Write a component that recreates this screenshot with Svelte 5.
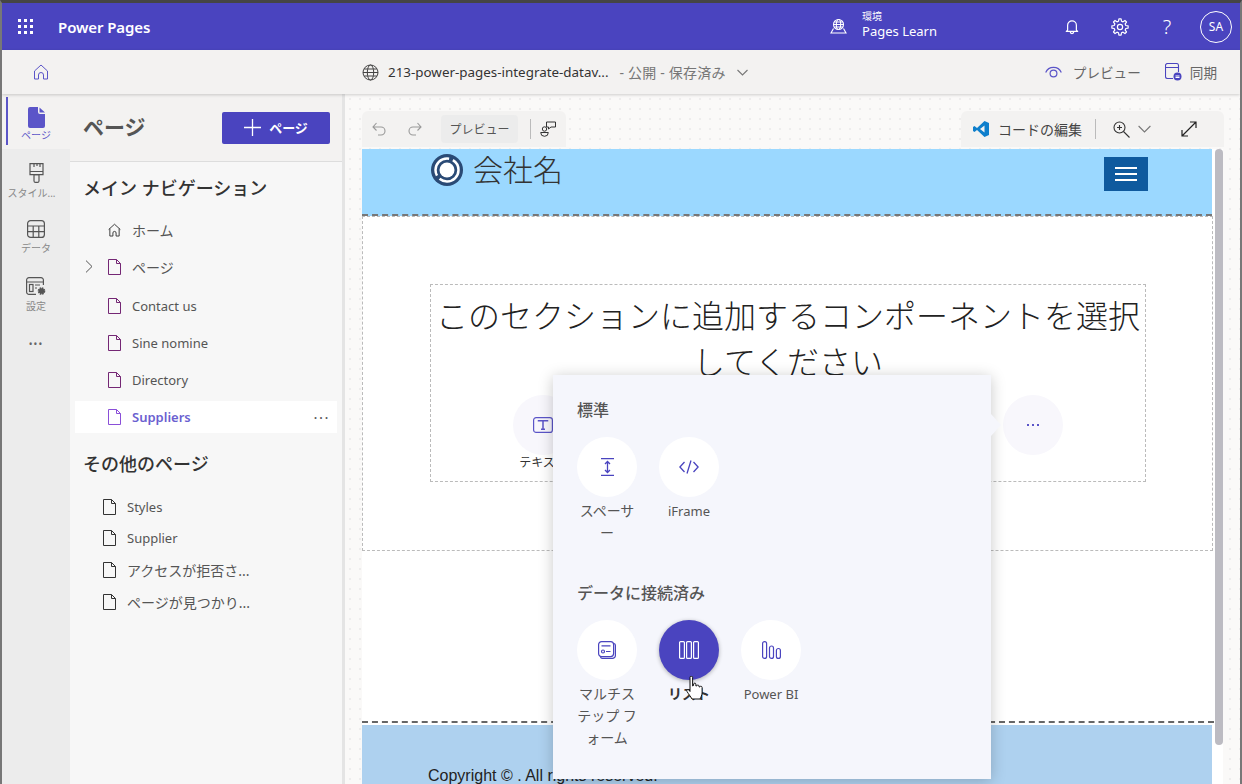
<script>
  const railItems = [
    { label: "ページ", icon: "page", active: true },
    { label: "スタイル...", icon: "brush", long: true },
    { label: "データ", icon: "table" },
    { label: "設定", icon: "settings" }
  ];
  const mainNav = [
    { label: "ホーム", icon: "home", jp: true },
    { label: "ページ", icon: "file", chevron: true, jp: true },
    { label: "Contact us", icon: "file" },
    { label: "Sine nomine", icon: "file" },
    { label: "Directory", icon: "file" },
    { label: "Suppliers", icon: "file", selected: true }
  ];
  const otherPages = [
    { label: "Styles" },
    { label: "Supplier" },
    { label: "アクセスが拒否さ...", jp: true },
    { label: "ページが見つかり...", jp: true }
  ];
  const components = ["テキスト", "画像", "ビデオ", "ボタン", "フォーム"];

  // outline of a cog, 8 teeth
  function gearPath(cx, cy, outer, inner, teeth) {
    const step = (Math.PI * 2) / teeth;
    let d = "";
    for (let t = 0; t < teeth; t++) {
      const a = t * step;
      const pts = [
        [inner, a - step * 0.32],
        [outer, a - step * 0.17],
        [outer, a + step * 0.17],
        [inner, a + step * 0.32]
      ];
      for (const [r, ang] of pts) {
        const x = (cx + r * Math.cos(ang)).toFixed(2);
        const y = (cy + r * Math.sin(ang)).toFixed(2);
        d += (d ? "L" : "M") + x + " " + y;
      }
    }
    return d + "z";
  }
</script>

<div class="app">
  <header class="topbar">
    <svg class="waffle" width="16" height="16" viewBox="0 0 16 16" fill="#fff">
      <rect x="0" y="0" width="3" height="3" /><rect x="6" y="0" width="3" height="3" /><rect x="12" y="0" width="3" height="3" />
      <rect x="0" y="6" width="3" height="3" /><rect x="6" y="6" width="3" height="3" /><rect x="12" y="6" width="3" height="3" />
      <rect x="0" y="12" width="3" height="3" /><rect x="6" y="12" width="3" height="3" /><rect x="12" y="12" width="3" height="3" />
    </svg>
    <span class="brand">Power Pages</span>
    <div class="env">
      <svg width="17" height="17" viewBox="0 0 17 17" fill="none" stroke="#fff" stroke-width="1.1">
        <circle cx="8.5" cy="6.5" r="5" />
        <ellipse cx="8.5" cy="6.5" rx="2.2" ry="5" />
        <path d="M3.5 6.5h10M4.300 4h8.400M4.300 9h8.400" />
        <path d="M3.500 10.500 1 15h15l-2.500-4.500" />
      </svg>
      <div class="env-text">
        <span class="env-label">環境</span>
        <span class="env-name">Pages Learn</span>
      </div>
    </div>
    <svg class="bell" width="14" height="16" viewBox="0 0 16 18" fill="none" stroke="#fff" stroke-width="1.400">
      <path d="M3 12.500V7a5 5 0 0 1 10 0v5.500l1.500 1.500h-13z" stroke-linejoin="round" />
      <path d="M6 14.500a2 2 0 0 0 4 0" />
    </svg>
    <svg class="gear" width="18" height="18" viewBox="0 0 18 18" fill="none" stroke="#fff" stroke-width="1.200">
      <circle cx="9" cy="9" r="2.600" />
      <path d={gearPath(9, 9, 8.2, 6, 8)} stroke-linejoin="round" />
    </svg>
    <span class="help">?</span>
    <span class="avatar">SA</span>
  </header>

  <div class="subbar">
    <svg class="sub-home" width="16" height="16" viewBox="0 0 16 16" fill="none" stroke="#5b55c8" stroke-width="1">
      <path d="M1.500 7 8 1l6.500 6v8h-4v-4a2.500 2.500 0 0 0-5 0v4h-4z" stroke-linejoin="round" />
    </svg>
    <div class="site">
      <svg width="17" height="17" viewBox="0 0 17 17" fill="none" stroke="#444" stroke-width="1">
        <circle cx="8.500" cy="8.500" r="7.500" />
        <ellipse cx="8.500" cy="8.500" rx="3.200" ry="7.500" />
        <path d="M1 8.500h15M2 5h13M2 12h13" />
      </svg>
      <span class="site-name">213-power-pages-integrate-datav...</span>
      <span class="site-state">- 公開 - 保存済み</span>
      <svg width="11" height="7" viewBox="0 0 11 7" fill="none" stroke="#777" stroke-width="1.100"><path d="M.5 1 5.500 6l5-5" /></svg>
    </div>
    <div class="sub-actions">
      <svg width="17" height="12" viewBox="0 0 17 12" fill="none" stroke="#5b55c8" stroke-width="1.200">
        <path d="M.7 6.500a8.500 8.500 0 0 1 15.600 0" />
        <circle cx="8.500" cy="7.500" r="3.400" />
      </svg>
      <span class="sub-label preview">プレビュー</span>
      <svg class="sync" width="17" height="18" viewBox="0 0 17 18" fill="none" stroke="#4a44bf" stroke-width="1.100">
        <path d="M8 15.500H2.500a2 2 0 0 1-2-2v-11a2 2 0 0 1 2-2h9a2 2 0 0 1 2 2V9M.5 4.500h13" />
        <circle cx="12.500" cy="13.500" r="4" fill="#4a44bf" stroke="none" />
        <path d="M10.500 13h4M10.500 14.500h4" stroke="#fff" />
      </svg>
      <span class="sub-label sync-label">同期</span>
    </div>
  </div>

  <div class="workspace">
    <nav class="rail">
      {#each railItems as item}
        <div class="rail-item" class:active={item.active} class:long={item.long}>
          {#if item.icon === "page"}
            <svg width="17" height="21" viewBox="0 0 17 21">
              <path d="M2 0h8v5a2 2 0 0 0 2 2h5v12a2 2 0 0 1-2 2H2a2 2 0 0 1-2-2V2a2 2 0 0 1 2-2z" fill="#5b55c8" />
              <path d="M11.500 .5 17 5.500h-5.500z" fill="#5b55c8" />
            </svg>
          {:else if item.icon === "brush"}
            <svg width="15" height="20" viewBox="0 0 15 20" fill="none" stroke="#555" stroke-width="1.200">
              <path d="M1 .6h13v11H1zM1 8.500h13M5 .6v3.500M8 .6v2.500M11 .6v3.500" />
              <path d="M5 11.600h5V18a1.500 1.500 0 0 1-1.500 1.400h-2A1.500 1.500 0 0 1 5 18z" />
            </svg>
          {:else if item.icon === "table"}
            <svg width="18" height="18" viewBox="0 0 18 18" fill="none" stroke="#555" stroke-width="1.200">
              <rect x=".6" y=".6" width="16.800" height="16.800" rx="3" />
              <path d="M.6 6h16.800M.6 11.700h16.800M6.200 6v11.400M11.800 6v11.400" />
            </svg>
          {:else}
            <svg width="20" height="19" viewBox="0 0 20 19" fill="none" stroke="#555" stroke-width="1.200">
              <path d="M17.400 8V3a2.400 2.400 0 0 0-2.400-2.400H3A2.400 2.400 0 0 0 .6 3v12A2.400 2.400 0 0 0 3 17.400h7M.6 5h16.800" />
              <rect x="3.500" y="7.500" width="3.500" height="7" />
              <path d="M9 8h5M9 11h2" />
              <circle cx="15.500" cy="14" r="2.800" fill="#555" stroke-dasharray="1.500 .7" stroke-width="2" />
            </svg>
          {/if}
          <span>{item.label}</span>
        </div>
      {/each}
      <span class="rail-more">•••</span>
    </nav>

    <aside class="panel">
      <div class="panel-head">
        <h1>ページ</h1>
        <button class="add">
          <svg width="17" height="17" viewBox="0 0 17 17" stroke="#fff" stroke-width="1.300"><path d="M8.500 0v17M0 8.500h17" /></svg>
          ページ
        </button>
      </div>
      <div class="panel-body">
        <h2>メイン ナビゲーション</h2>
        <ul class="nav">
          {#each mainNav as row}
            <li class:selected={row.selected} class:jp={row.jp}>
              {#if row.chevron}
                <svg class="chev" width="8" height="13" viewBox="0 0 8 13" fill="none" stroke="#555" stroke-width="1"><path d="m1 .6 6 5.900-6 5.900" /></svg>
              {/if}
              {#if row.icon === "home"}
                <svg class="ico" width="13" height="14" viewBox="0 0 14 14" fill="none" stroke="#333" stroke-width="1"><path d="M.7 6.500 7 .8l6.300 5.700M2 5.500v8h3.300v-3.300a1.700 1.700 0 0 1 3.400 0v3.300H12v-8" /></svg>
              {:else}
                <svg class="ico" width="13" height="16" viewBox="0 0 13 16" fill="none" stroke={row.selected ? "#8a4fd8" : "#742774"} stroke-width="1"><path d="M.5.5h8l4 4v11H.5zM8.500.5v4h4" /></svg>
              {/if}
              <span>{row.label}</span>
              {#if row.selected}
                <span class="more">···</span>
              {/if}
            </li>
          {/each}
        </ul>
        <h2 class="second">その他のページ</h2>
        <ul class="other">
          {#each otherPages as page}
            <li class:jp={page.jp}>
              <svg width="13" height="16" viewBox="0 0 13 16" fill="none" stroke="#333" stroke-width="1"><path d="M.5.5h8l4 4v11H.5zM8.500.5v4h4" /></svg>
              <span>{page.label}</span>
            </li>
          {/each}
        </ul>
      </div>
    </aside>

    <main class="canvas">
      <div class="tools">
        <div class="toolgroup">
          <svg width="14" height="14" viewBox="0 0 14 14" fill="none" stroke="#999" stroke-width="1.100"><path d="M1 5h8a4 4 0 0 1 0 8H6M4.500 1 1 5l3.500 3.500" /></svg>
          <svg class="redo" width="14" height="14" viewBox="0 0 14 14" fill="none" stroke="#999" stroke-width="1.100"><path d="M13 5H5a4 4 0 0 0 0 8h3M9.500 1 13 5 9.500 8.500" /></svg>
          <span class="preview-chip">プレビュー</span>
          <i class="sep"></i>
          <svg width="16" height="16" viewBox="0 0 16 16" fill="none" stroke="#333" stroke-width="1"><circle cx="4.500" cy="8" r="2.200" /><path d="M.7 11.500h7.600a3.800 3.800 0 0 1-7.600 0zM6.500 1h9v5H11l-2.500 2V6h-2z" /></svg>
        </div>
        <div class="toolgroup right">
          <svg width="16" height="16" viewBox="0 0 16 16"><path d="M11.500 0 16 2v12l-4.500 2L4 9l-2.500 2L0 10V6l1.500-1L4 7z" fill="#0f7fcc" /><path d="M11.500 4.500v7L7 8z" fill="#f3f2f1" /></svg>
          <span class="code">コードの編集</span>
          <i class="sep"></i>
          <svg class="zoom" width="17" height="17" viewBox="0 0 17 17" fill="none" stroke="#333" stroke-width="1.100"><circle cx="6.500" cy="6.500" r="5.500" /><path d="m10.500 10.500 6 6M4 6.500h5M6.500 4v5" /></svg>
          <svg class="caret" width="13" height="8" viewBox="0 0 13 8" fill="none" stroke="#777" stroke-width="1.100"><path d="m.6 1 5.900 6 5.900-6" /></svg>
          <svg class="expand" width="16" height="16" viewBox="0 0 16 16" fill="none" stroke="#222" stroke-width="1.200"><path d="M1 15 15 1M9 1h6v6M1 9v6h6" /></svg>
        </div>
      </div>

      <div class="page">
        <div class="site-header">
          <svg width="32" height="32" viewBox="0 0 32 32">
            <circle cx="16" cy="16" r="16" fill="#2a4a75" />
            <circle cx="16" cy="16" r="11.500" fill="none" stroke="#fff" stroke-width="2.500" stroke-dasharray="26 4" />
            <circle cx="16" cy="16" r="7.500" fill="#fff" />
          </svg>
          <span class="company">会社名</span>
          <span class="burger"><i></i><i></i><i></i></span>
        </div>
        <section class="section">
          <div class="picker">
            <p class="picker-title">このセクションに追加するコンポーネントを選択してください</p>
            <div class="picker-row">
              {#each components as c, i}
                <div class="pick">
                  <span class="pick-circle">
                    {#if i === 0}
                      <svg width="20" height="16" viewBox="0 0 20 16" fill="none" stroke="#5b55c8" stroke-width="1.200">
                        <rect x=".6" y=".6" width="18.800" height="14.800" rx="2.500" />
                        <path d="M5.500 4.500v-.7h9v.7M10 3.800v8.400M8 12.200h4" stroke-width="1.500" />
                      </svg>
                    {/if}
                  </span>
                  <span>{c}</span>
                </div>
              {/each}
              <div class="pick">
                <span class="pick-circle dots"><b></b><b></b><b></b></span>
              </div>
            </div>
          </div>
        </section>
        <div class="empty"></div>
        <footer class="site-footer">Copyright © . All rights reserved.</footer>
      </div>

      <i class="scrollbar"></i>

      <div class="popover">
        <i class="arrow"></i>
        <h3>標準</h3>
        <div class="grid">
          <div class="tile jp">
            <span class="tile-circle">
              <svg width="15" height="18" viewBox="0 0 15 18" fill="none" stroke="#4a44bf" stroke-width="1.300"><path d="M1 .7h13M1 17.300h13M7.500 3.500v11M5 6l2.500-2.500L10 6M5 12l2.500 2.500L10 12" /></svg>
            </span>
            <span>スペーサー</span>
          </div>
          <div class="tile">
            <span class="tile-circle">
              <svg width="20" height="14" viewBox="0 0 20 14" fill="none" stroke="#4a44bf" stroke-width="1.300"><path d="M5.500 2 .9 7l4.600 5M14.500 2l4.600 5-4.600 5M12 .5 8 13.500" /></svg>
            </span>
            <span>iFrame</span>
          </div>
        </div>
        <h3 class="data">データに接続済み</h3>
        <div class="grid">
          <div class="tile jp">
            <span class="tile-circle">
              <svg width="18" height="18" viewBox="0 0 18 18" fill="none" stroke="#4a44bf" stroke-width="1.200">
                <path d="M16 2.500a2 2 0 0 1 1.400 2v9.900a3 3 0 0 1-3 3H4.500a2 2 0 0 1-2-1.400" />
                <rect x=".6" y=".6" width="15" height="15" rx="3" />
                <path d="M3.500 4.800h9M8 10.500h4.500" />
                <circle cx="5" cy="10.500" r="1.500" />
              </svg>
            </span>
            <span>マルチステップ フォーム</span>
          </div>
          <div class="tile jp hover">
            <span class="tile-circle">
              <svg width="20" height="18" viewBox="0 0 20 18" fill="none" stroke="#fff" stroke-width="1.200"><rect x=".6" y=".6" width="4.800" height="16.800" rx="1" /><rect x="7.600" y=".6" width="4.800" height="16.800" rx="1" /><rect x="14.600" y=".6" width="4.800" height="16.800" rx="1" /></svg>
            </span>
            <span>リスト</span>
          </div>
          <div class="tile">
            <span class="tile-circle">
              <svg width="19" height="18" viewBox="0 0 19 18" fill="none" stroke="#4a44bf" stroke-width="1.200"><rect x=".6" y=".6" width="4" height="16.800" rx="2" /><rect x="7.500" y="5" width="4" height="12.400" rx="2" /><rect x="14.400" y="7.500" width="4" height="9.900" rx="2" /></svg>
            </span>
            <span>Power BI</span>
          </div>
        </div>
        <svg class="cursor" width="17" height="24" viewBox="0 0 17 24" fill="#fff" stroke="#111" stroke-width="1">
          <path d="M4 1.500a1.300 1.300 0 0 1 2.600 0V10l1-.5V8a1.200 1.200 0 0 1 2.300 0v2l1-.3a1.200 1.200 0 0 1 2.200.3v1l.8-.2a1.200 1.200 0 0 1 2.200.6v5.600c0 2-1.500 4.500-2 6H6c-1-2-3.500-5-5-7.500-.8-1.500.8-2.800 2-1.500l1 1.500z" stroke-linejoin="round" />
        </svg>
      </div>
    </main>
  </div>
</div>

<style>
  :global(body) {
    margin: 0;
    background: #777;
  }
  .app {
    width: 1242px;
    height: 784px;
    box-sizing: border-box;
    border-top: 3px solid #454545;
    border-left: 2px solid #777;
    border-right: 2px solid #777;
    display: flex;
    flex-direction: column;
    overflow: hidden;
    font-family: "Noto Sans", "Noto Sans CJK JP", sans-serif;
    color: #333;
  }
  svg {
    flex: none;
    display: block;
  }
  i {
    display: block;
  }

  .topbar {
    height: 47px;
    flex: none;
    background: #4a44bf;
    color: #fff;
    display: flex;
    align-items: center;
    padding: 0 8px 0 16px;
  }
  .brand {
    margin-left: 24px;
    font-size: 15px;
    font-weight: 600;
    letter-spacing: -0.1px;
  }
  .env {
    margin-left: auto;
    display: flex;
    align-items: center;
    gap: 15px;
  }
  .env-text {
    display: flex;
    flex-direction: column;
    line-height: 15px;
    margin-top: -2px;
  }
  .env-label {
    font-size: 10px;
    line-height: 11px;
  }
  .env-name {
    font-size: 13px;
    line-height: 19px;
  }
  .bell {
    margin-left: 128px;
  }
  .gear {
    margin-left: 32px;
  }
  .help {
    margin-left: 31px;
    font-size: 20px;
    font-weight: 300;
    width: 14px;
    text-align: center;
  }
  .avatar {
    margin-left: 26px;
    width: 30px;
    height: 30px;
    border: 1px solid #fff;
    border-radius: 50%;
    display: flex;
    align-items: center;
    justify-content: center;
    font-size: 12px;
  }

  .subbar {
    height: 44px;
    flex: none;
    background: #f3f2f1;
    display: flex;
    align-items: center;
    padding: 0 23px 0 31px;
    box-shadow: 0 1px 3px rgba(0, 0, 0, 0.18);
    position: relative;
    z-index: 2;
  }
  .site {
    margin-left: 313px;
    display: flex;
    align-items: center;
    font-size: 13.400px;
  }
  .site-name {
    margin-left: 9px;
    color: #333;
  }
  .site-state {
    margin-left: 11px;
    margin-right: 11px;
    color: #777;
    font-size: 14px;
    letter-spacing: 0.2px;
  }
  .sub-actions {
    margin-left: auto;
    display: flex;
    align-items: center;
  }
  .sub-label {
    font-size: 13.600px;
    color: #666;
    margin-left: 11px;
  }
  .sub-label.preview {
    margin-right: 24px;
  }
  .sub-label.sync-label {
    margin-left: 8px;
  }

  .workspace {
    flex: 1;
    min-height: 0;
    display: flex;
  }
  .rail {
    width: 68px;
    flex: none;
    background: #ececec;
    display: flex;
    flex-direction: column;
    align-items: stretch;
    box-shadow: 1px 0 2px rgba(0, 0, 0, 0.05);
  }
  .rail-item {
    height: 57px;
    padding-top: 14px;
    box-sizing: border-box;
    display: flex;
    flex-direction: column;
    align-items: center;
    font-size: 10px;
    line-height: 12px;
    color: #888;
    gap: 4px;
    position: relative;
    white-space: nowrap;
  }
  .rail-item.long span {
    margin-right: 9px;
  }
  .rail-item.active {
    background: #f3f2f1;
    color: #5b55c8;
    height: 55px;
    padding-top: 13px;
    gap: 1px;
  }
  .rail-item.active::before {
    content: "";
    position: absolute;
    left: 4px;
    top: 3px;
    width: 2px;
    height: 48px;
    background: #5b55c8;
  }
  .rail-more {
    text-align: center;
    font-size: 10px;
    letter-spacing: 1px;
    color: #666;
    margin-top: 17px;
  }

  .panel {
    width: 272px;
    flex: none;
    background: #f7f7f7;
    border-right: 3px solid #e4e4e4;
    display: flex;
    flex-direction: column;
  }
  .panel-head {
    height: 68px;
    flex: none;
    box-sizing: border-box;
    background: #f3f2f1;
    border-bottom: 1px solid #ddd;
    display: flex;
    align-items: center;
    padding: 0 12px 0 13px;
    justify-content: space-between;
  }
  h1 {
    margin: -3px 0 0;
    font-size: 21px;
    font-weight: 600;
    color: #555;
  }
  .add {
    width: 108px;
    height: 32px;
    border: 0;
    border-radius: 2px;
    background: #4a44bf;
    color: #fff;
    font: 600 13px "Noto Sans", "Noto Sans CJK JP", sans-serif;
    display: flex;
    align-items: center;
    justify-content: center;
    gap: 8px;
  }
  .panel-body {
    padding: 14px 0 0 5px;
  }
  h2 {
    margin: 0 0 0 8px;
    font-size: 18px;
    line-height: 24px;
    font-weight: 500;
    color: #333;
  }
  h2.second {
    margin-top: 19px;
  }
  ul {
    list-style: none;
    margin: 0;
    padding: 0;
  }
  .nav {
    margin: 11px 5px 0 0;
  }
  .nav li {
    height: 37px;
    display: flex;
    align-items: center;
    padding-left: 33px;
    font-size: 13px;
    color: #555;
    position: relative;
    box-sizing: border-box;
  }
  .nav li.jp,
  .other li.jp {
    font-size: 14px;
  }
  .nav li:nth-child(2) {
    margin-bottom: 2px;
  }
  .nav li.selected {
    height: 32px;
    margin-top: 3px;
    background: #fff;
    color: #6b5fd0;
    font-weight: 600;
  }
  .chev {
    position: absolute;
    left: 10px;
    top: 12px;
  }
  .ico {
    margin-right: 11px;
  }
  .more {
    margin-left: auto;
    margin-right: 7px;
    font-size: 15px;
    font-weight: 400;
    letter-spacing: 1.500px;
    color: #555;
  }
  .other {
    margin-top: 15px;
  }
  .other li {
    height: 31.600px;
    display: flex;
    align-items: center;
    gap: 11px;
    padding-left: 28px;
    font-size: 13px;
    color: #555;
  }

  .canvas {
    flex: 1;
    min-width: 0;
    position: relative;
    padding: 17px 0 0 17px;
    overflow: hidden;
    background-color: #faf9f8;
    background-image: radial-gradient(circle, #eeeded 0.8px, transparent 1.100px);
    background-size: 10px 10px;
    display: flex;
    flex-direction: column;
  }
  .tools {
    display: flex;
    justify-content: space-between;
    width: 862px;
    flex: none;
  }
  .toolgroup {
    height: 36px;
    background: #f3f2f1;
    border-radius: 6px 6px 0 0;
    display: flex;
    align-items: center;
    padding: 0 10px;
  }
  .redo {
    margin-left: 22px;
  }
  .preview-chip {
    margin-left: 19px;
    background: #ececec;
    border-radius: 4px;
    height: 28px;
    width: 77px;
    display: flex;
    align-items: center;
    justify-content: center;
    font-size: 12px;
    color: #555;
  }
  .sep {
    width: 1px;
    height: 20px;
    background: #bbb;
    margin: 0 9px 0 12px;
  }
  .toolgroup.right {
    padding: 0 0 0 12px;
  }
  .toolgroup.right .sep {
    margin: 0 17px 0 13px;
  }
  .toolgroup.right svg:first-child {
    margin-right: 9px;
  }
  .code {
    font-size: 14px;
    color: #444;
  }
  .caret {
    margin-left: 8px;
  }
  .expand {
    margin: 0 27px 0 30px;
  }

  .page {
    margin-top: 2px;
    width: 861px;
    flex: 1;
    background: #fff;
    display: flex;
    flex-direction: column;
  }
  .site-header {
    height: 60px;
    flex: none;
    background: #9bd8ff;
    display: flex;
    align-items: flex-start;
    padding: 5px 0 0 69px;
    border-bottom: 2px dashed #777;
    width: 781px;
  }
  .company {
    margin-left: 10px;
    font-size: 30px;
    line-height: 32px;
    font-weight: 300;
    color: #333;
  }
  .burger {
    margin-left: auto;
    margin-top: 3px;
    margin-right: 64px;
    width: 44px;
    height: 34px;
    background: #0f5a9e;
    display: flex;
    flex-direction: column;
    justify-content: center;
    align-items: center;
    gap: 4px;
  }
  .burger i {
    width: 22px;
    height: 2px;
    background: #fff;
  }
  .section {
    height: 335px;
    flex: none;
    box-sizing: border-box;
    border: 1px dashed #bbb;
    width: 851px;
    padding: 67px 66px 0 67px;
  }
  .picker {
    height: 198px;
    box-sizing: border-box;
    border: 1px dashed #bbb;
    text-align: center;
  }
  .picker-title {
    margin: 8px 0 0;
    font-size: 32px;
    line-height: 46px;
    font-weight: 300;
    color: #222;
  }
  .picker-row {
    margin: 10px 0 0 82px;
    display: flex;
    gap: 38px;
  }
  .pick {
    width: 60px;
    font-size: 12px;
    line-height: 16px;
    color: #333;
    display: flex;
    flex-direction: column;
    align-items: center;
    white-space: nowrap;
  }
  .pick-circle {
    width: 60px;
    height: 60px;
    border-radius: 50%;
    background: #f8f7fc;
    display: flex;
    align-items: center;
    justify-content: center;
  }
  .dots {
    gap: 3px;
  }
  .dots b {
    width: 2px;
    height: 2px;
    background: #5b55c8;
  }
  .empty {
    height: 172px;
    width: 852px;
    flex: none;
    border-bottom: 2px dashed #666;
    box-sizing: border-box;
  }
  .site-footer {
    margin-top: 2px;
    width: 850px;
    box-sizing: border-box;
    flex: 1;
    background: #aed1ef;
    padding: 42px 0 0 66px;
    font: 16px "Liberation Sans", sans-serif;
    color: #222;
  }
  .scrollbar {
    position: absolute;
    left: 870px;
    top: 55px;
    width: 8px;
    height: 596px;
    background: #bcbbc2;
    border-radius: 4px;
  }

  .popover {
    position: absolute;
    left: 208px;
    top: 281px;
    width: 438px;
    height: 404px;
    box-sizing: border-box;
    background: #f5f6fc;
    box-shadow: 0 2px 14px rgba(0, 0, 0, 0.22);
    padding: 25px 24px 0;
  }
  .arrow {
    position: absolute;
    right: -10px;
    top: 39px;
    width: 0;
    height: 0;
    border: 11px solid transparent;
    border-right: 0;
    border-left: 10px solid #f5f6fc;
  }
  h3 {
    margin: 0;
    font-size: 16px;
    line-height: 20px;
    font-weight: 500;
    color: #555;
  }
  .grid {
    display: flex;
    gap: 22px;
    margin-top: 17px;
    height: 146px;
  }
  .tile {
    width: 60px;
    display: flex;
    flex-direction: column;
    align-items: center;
    text-align: center;
    font-size: 13px;
    line-height: 22px;
    color: #555;
    gap: 3px;
    line-break: anywhere;
  }
  .tile.jp {
    font-size: 14px;
  }
  .tile-circle {
    width: 60px;
    height: 60px;
    flex: none;
    border-radius: 50%;
    background: #fff;
    display: flex;
    align-items: center;
    justify-content: center;
  }
  .tile.hover .tile-circle {
    background: #4a44bf;
    box-shadow: 0 1px 4px rgba(0, 0, 0, 0.3);
  }
  .tile.hover {
    font-weight: 700;
    color: #333;
  }
  .cursor {
    position: absolute;
    left: 133px;
    top: 301px;
  }
</style>
